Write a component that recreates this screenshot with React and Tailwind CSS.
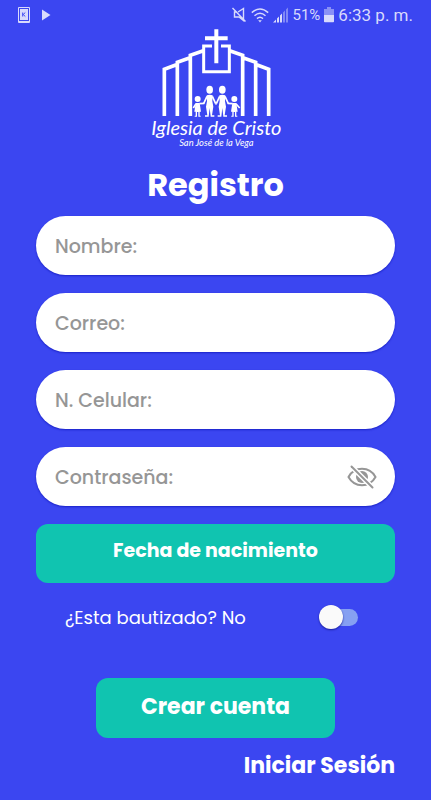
import React, { useState } from "react";

const fields = [
  { id: "nombre", label: "Nombre:", type: "text" },
  { id: "correo", label: "Correo:", type: "email" },
  { id: "celular", label: "N. Celular:", type: "tel" },
];

function StatusBar() {
  return (
    <div className="flex h-[30px] items-center justify-between px-[18px] font-['Roboto',sans-serif] text-[#d8dafc]">
      <div className="flex items-center gap-3">
        <svg className="h-4 w-3" viewBox="0 0 12 16" fill="none">
          <rect width="12" height="16" rx="1" fill="#d8dafc" />
          <rect x="1.5" y="1.5" width="9" height="12" stroke="#3b46f1" />
          <path
            d="M4.7 5.500v4M7.300 5.500 5.200 7.500 7.300 9.500"
            stroke="#3b46f1"
          />
        </svg>
        <svg className="h-3 w-[9px]" viewBox="0 0 9 12" fill="currentColor">
          <path d="M0 0.5 8.5 6 0 11.5z" />
        </svg>
      </div>

      <div className="flex items-center">
        <svg
          className="h-4 w-4"
          viewBox="0 0 16 16"
          fill="none"
          stroke="currentColor"
          strokeWidth="1.4"
        >
          <path d="M7 5 12.500 1.500v12L8 10H3.500V5h2.500M1.500 1l13 13.500" />
        </svg>
        <svg
          className="ml-1 h-4 w-[18px]"
          viewBox="0 0 18 16"
          fill="none"
          stroke="currentColor"
          strokeWidth="1.5"
        >
          <path d="M.8 5.6Q9-1.6 17.2 5.6M3.5 8.7Q9 3.8 14.5 8.7M6 11.6Q9 9 12 11.6" />
          <path d="M7.2 13.2h3.6L9 15.5z" fill="currentColor" stroke="none" />
        </svg>
        <svg className="ml-1 h-4 w-4" viewBox="0 0 16 16" fill="currentColor">
          <path d="M0 15.5 3 12.5v3zM4 11.5l2-2v6H4zM7 8.5l2-2v9H7z" />
          <path d="M10 5.5l2-2v12h-2zM13 2.5l2-2v15h-2z" opacity=".45" />
        </svg>
        <span className="ml-1 text-[15px] leading-5">51%</span>
        <svg
          className="ml-1 h-4 w-[10px]"
          viewBox="0 0 10 16"
          fill="currentColor"
        >
          <path d="M3 0h4v2h3v6H0V2h3z" opacity=".5" />
          <path d="M0 8h10v6.5q0 .8-.8.8H.8q-.8 0-.8-.8z" />
        </svg>
        <span className="ml-1 text-[17px] leading-5">6:33 p. m.</span>
      </div>
    </div>
  );
}

function Adult({ x }) {
  return (
    <g transform={`translate(${x} 0)`}>
      <ellipse cx="0" cy="191" rx="10" ry="12" fill="white" stroke="none" />
      <path
        d="M-9 208Q0 204 9 208L8 226 11 242 7 268H14V272H3L0 246-3 272H-14V268H-7L-11 242-8 226z"
        fill="white"
        stroke="none"
      />
      <path d="M-8 211-18 233M8 211 18 233" strokeWidth="5" />
    </g>
  );
}

function Child({ x }) {
  return (
    <g transform={`translate(${x} 0)`}>
      <circle cx="0" cy="219" r="9" fill="white" stroke="none" />
      <path
        d="M-6 231H6L10 257H6V269H9V272H2V258H-2V272H-9V269H-6V257H-10z"
        fill="white"
        stroke="none"
      />
    </g>
  );
}

function Logo() {
  return (
    <svg
      className="mx-auto h-[130px] w-[150px]"
      viewBox="0 0 450 390"
      fill="none"
      stroke="white"
    >
      <path
        d="M70 270V130L106 116M109 270V109L145 96M148 270V88L187 74M383 270V130L347 116M344 270V109L308 96M305 270V88L266 74"
        strokeWidth="11"
      />
      <path d="M213 60H188V137H265V60H240" strokeWidth="9" />
      <path d="M226 10V112M192 37H260" strokeWidth="12" />
      <Child x={170} />
      <Adult x={206} />
      <Adult x={244} />
      <Child x={280} />
      <path
        d="M165 233 157 246M175 233 190 232M223 234H227M260 232 275 233M285 233 296 246"
        strokeWidth="5"
      />
      <text
        x="226"
        y="328"
        textAnchor="middle"
        className="fill-white stroke-none font-['Lato',cursive] text-[60px] italic"
      >
        Iglesia de Cristo
      </text>
      <text
        x="226"
        y="360"
        textAnchor="middle"
        className="fill-white stroke-none font-['Lato',cursive] text-[28px] italic"
      >
        San José de la Vega
      </text>
    </svg>
  );
}

function EyeOffIcon() {
  return (
    <svg
      className="h-6 w-[30px]"
      viewBox="0 0 30 24"
      fill="none"
      stroke="#969696"
      strokeWidth="2"
      strokeLinecap="round"
    >
      <path d="M1.500 12Q6 3.800 15 3.800T28.500 12Q24 20.200 15 20.200T1.500 12z" />
      <circle cx="15" cy="12" r="6" fill="#969696" stroke="none" />
      <path d="M4.500 1.500 25.500 22.500" stroke="white" strokeWidth="5" />
      <path d="M4.500 1.500 25.500 22.500" />
    </svg>
  );
}

function Field({ id, label, type, children }) {
  return (
    <div className="relative">
      <input
        id={id}
        type={type}
        aria-label={label}
        placeholder={label}
        className="block h-[59px] w-full rounded-full bg-white px-[19px] pt-0.5 text-[19px] font-medium text-gray-700 shadow-[0_1px_2px_#1a22c8] outline-none placeholder:text-[#969696]"
      />
      {children}
    </div>
  );
}

export default function App() {
  const [showPassword, setShowPassword] = useState(false);
  const [baptized, setBaptized] = useState(false);

  return (
    <div className="min-h-screen bg-[#3b46f1] font-['Poppins','Inter',sans-serif] text-white">
      <StatusBar />

      <main className="-mt-1">
        <Logo />
        <h1 className="mt-2 text-center text-[32px] leading-[42px] font-bold">
          Registro
        </h1>

        <form className="mt-[10px] px-9" onSubmit={(e) => e.preventDefault()}>
          <div className="flex flex-col gap-[18px]">
            {fields.map((field) => (
              <Field key={field.id} {...field} />
            ))}
            <Field
              id="password"
              label="Contraseña:"
              type={showPassword ? "text" : "password"}
            >
              <button
                type="button"
                aria-label="Mostrar contraseña"
                onClick={() => setShowPassword(!showPassword)}
                className="absolute inset-y-0 right-[18px] flex items-center"
              >
                <EyeOffIcon />
              </button>
            </Field>
            <button
              type="button"
              className="h-[59px] w-full rounded-xl bg-[#10c4b0] pb-1 text-[19px] font-bold"
            >
              Fecha de nacimiento
            </button>
          </div>

          <label className="mt-[18px] flex h-8 items-center justify-between pr-[37px] pl-[29px] text-[18px]">
            <span>¿Esta bautizado? {baptized ? "Si" : "No"}</span>
            <span className="relative flex h-6 w-[39px] items-center">
              <input
                type="checkbox"
                role="switch"
                checked={baptized}
                onChange={(e) => setBaptized(e.target.checked)}
                className="peer ml-1 h-[17px] w-[35px] appearance-none rounded-full bg-[#86a0f2]"
              />
              <span className="pointer-events-none absolute left-0 h-6 w-6 rounded-full bg-[#fafafa] shadow-[0_1px_2px_#1a1f9c] peer-checked:left-auto peer-checked:right-0"></span>
            </span>
          </label>

          <button
            type="submit"
            className="mx-auto mt-[45px] block h-[60px] w-2/3 rounded-xl bg-[#10c4b0] pb-1 text-[22px] font-bold"
          >
            Crear cuenta
          </button>
          <div className="mt-3 text-right">
            <a href="#login" className="text-[22px] leading-8 font-bold">
              Iniciar Sesión
            </a>
          </div>
        </form>
      </main>
    </div>
  );
}
